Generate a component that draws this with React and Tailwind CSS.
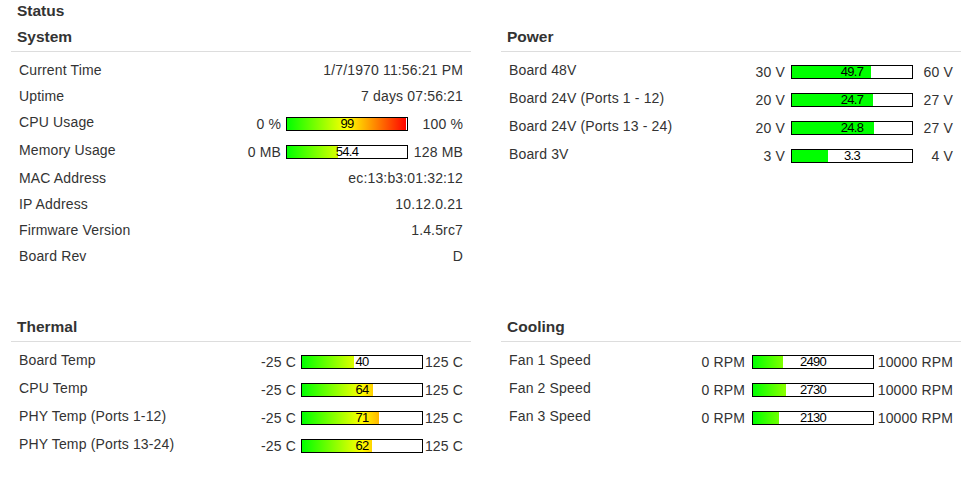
import React from "react";

const GRADIENT =
  "h-full bg-[linear-gradient(to_right,#00ff00,#ffff00_50%,#ff0000)] bg-[length:120px_100%] bg-no-repeat";

function Meter({ value, min, max, text, solid }) {
  const pct = Math.max(0, Math.min(1, (value - min) / (max - min)));
  return (
    <div className="relative w-[122px] h-[14px] border border-black bg-white shrink-0">
      <div
        className={solid ? "h-full bg-[#00ff00]" : GRADIENT}
        style={{ width: pct * 120 }}
      />
      <div className="absolute inset-0 flex justify-center text-[13px] leading-[12px] tracking-[-0.7px] text-black">
        {text}
      </div>
    </div>
  );
}

function PlainRow({ label, value }) {
  return (
    <div className="flex items-start justify-between h-[26px] px-[8px]">
      <div className="pt-[3px] leading-[20px]">{label}</div>
      <div className="pt-[3px] leading-[20px] text-right">{value}</div>
    </div>
  );
}

function MeterRow({ label, minLabel, maxLabel, value, min, max, text, solid, gap, maxW }) {
  return (
    <div className="flex items-start justify-between h-[28px] px-[8px]">
      <div className="pt-[3px] leading-[20px]">{label}</div>
      <div className="mt-[3px] h-[24px] flex items-center leading-[20px]">
        <span className="whitespace-nowrap" style={{ marginRight: gap }}>
          {minLabel}
        </span>
        <Meter value={value} min={min} max={max} text={text} solid={solid} />
        <span className="whitespace-nowrap text-right" style={{ width: maxW }}>
          {maxLabel}
        </span>
      </div>
    </div>
  );
}

function Section({ title, children }) {
  return (
    <div>
      <div className="pl-[6px] text-[15.5px] font-bold leading-[20px] tracking-normal text-[#333]">{title}</div>
      <div className="mt-[4px] border-t border-[#dddddd]" />
      <div className="pt-[5px]">{children}</div>
    </div>
  );
}

const power = [
  { label: "Board 48V", min: 30, max: 60, value: 49.7 },
  { label: "Board 24V (Ports 1 - 12)", min: 20, max: 27, value: 24.7 },
  { label: "Board 24V (Ports 13 - 24)", min: 20, max: 27, value: 24.8 },
  { label: "Board 3V", min: 3, max: 4, value: 3.3 },
];

const thermal = [
  { label: "Board Temp", value: 40 },
  { label: "CPU Temp", value: 64 },
  { label: "PHY Temp (Ports 1-12)", value: 71 },
  { label: "PHY Temp (Ports 13-24)", value: 62 },
];

const fans = [
  { label: "Fan 1 Speed", value: 2490 },
  { label: "Fan 2 Speed", value: 2730 },
  { label: "Fan 3 Speed", value: 2130 },
];

export default function App() {
  return (
    <div className="w-[979px] h-[486px] bg-white pl-[11px] text-[14px] tracking-[0.15px] text-[#333] font-['Liberation_Sans',Arial,sans-serif]">
      <div className="pt-[1px] pl-[6px] text-[15.5px] font-bold leading-[20px] tracking-normal">Status</div>

      <div className="mt-[6px] grid grid-cols-[460px_460px] gap-x-[30px] items-start">
        <Section title="System">
          <PlainRow label="Current Time" value="1/7/1970 11:56:21 PM" />
          <PlainRow label="Uptime" value="7 days 07:56:21" />
          <MeterRow
            label="CPU Usage"
            minLabel="0 %"
            maxLabel="100 %"
            value={99}
            min={0}
            max={100}
            text="99"
            gap={5}
            maxW={55}
          />
          <MeterRow
            label="Memory Usage"
            minLabel="0 MB"
            maxLabel="128 MB"
            value={54.4}
            min={0}
            max={128}
            text="54.4"
            gap={5}
            maxW={55}
          />
          <PlainRow label="MAC Address" value="ec:13:b3:01:32:12" />
          <PlainRow label="IP Address" value="10.12.0.21" />
          <PlainRow label="Firmware Version" value="1.4.5rc7" />
          <PlainRow label="Board Rev" value="D" />
        </Section>

        <Section title="Power">
          {power.map((p) => (
            <MeterRow
              key={p.label}
              label={p.label}
              minLabel={`${p.min} V`}
              maxLabel={`${p.max} V`}
              value={p.value}
              min={p.min}
              max={p.max}
              text={String(p.value)}
              solid
              gap={6}
              maxW={40}
            />
          ))}
        </Section>
      </div>

      <div className="mt-[48px] grid grid-cols-[460px_460px] gap-x-[30px] items-start">
        <Section title="Thermal">
          {thermal.map((t) => (
            <MeterRow
              key={t.label}
              label={t.label}
              minLabel="-25 C"
              maxLabel="125 C"
              value={t.value}
              min={-25}
              max={125}
              text={String(t.value)}
              gap={5}
              maxW={40}
            />
          ))}
        </Section>

        <Section title="Cooling">
          {fans.map((f) => (
            <MeterRow
              key={f.label}
              label={f.label}
              minLabel="0 RPM"
              maxLabel="10000 RPM"
              value={f.value}
              min={0}
              max={10000}
              text={String(f.value)}
              gap={7}
              maxW={79}
            />
          ))}
        </Section>
      </div>
    </div>
  );
}
